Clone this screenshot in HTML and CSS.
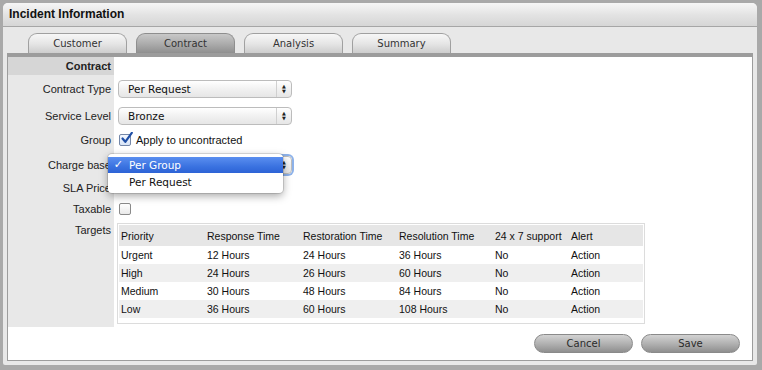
FILE: index.html
```html
<!DOCTYPE html>
<html>
<head>
	<title>Incident Information</title>
	<meta charset="UTF-8">
	<link rel="stylesheet" href="styles.css">
</head>
<body>
	<div class="panel">
		<div class="titlebar">Incident Information</div>
		<div class="tabs">
			<div class="tab">Customer</div>
			<div class="tab active">Contract</div>
			<div class="tab">Analysis</div>
			<div class="tab">Summary</div>
		</div>
		<div class="content">
			<div class="form">
				<div class="row r_head">
					<div class="label">Contract</div>
					<div class="value"></div>
				</div>
				<div class="row r_type">
					<div class="label">Contract Type</div>
					<div class="value">
						<div class="select"><span class="sel_text">Per Request</span><span class="sel_arrow">&#9650;<br>&#9660;</span></div>
					</div>
				</div>
				<div class="row r_level">
					<div class="label">Service Level</div>
					<div class="value">
						<div class="select"><span class="sel_text">Bronze</span><span class="sel_arrow">&#9650;<br>&#9660;</span></div>
					</div>
				</div>
				<div class="row r_group">
					<div class="label">Group</div>
					<div class="value">
						<span class="check checked">
							<svg width="13" height="13" viewBox="0 0 13 13">
								<path d="M2.5 6.5 L5.3 9.8 L11.8 0.8" fill="none" stroke="#1f4fa6" stroke-width="2.2" stroke-linecap="round" stroke-linejoin="round"/>
							</svg>
						</span>
						<span class="check_text">Apply to uncontracted</span>
					</div>
				</div>
				<div class="row r_charge">
					<div class="label">Charge base</div>
					<div class="value">
						<div class="select focus"><span class="sel_text">Per Group</span><span class="sel_arrow">&#9650;<br>&#9660;</span></div>
						<div class="popup">
							<div class="opt picked"><span class="tick">&#10003;</span>Per Group</div>
							<div class="opt"><span class="tick"></span>Per Request</div>
						</div>
					</div>
				</div>
				<div class="row r_price">
					<div class="label">SLA Price</div>
					<div class="value"></div>
				</div>
				<div class="row r_tax">
					<div class="label">Taxable</div>
					<div class="value"><span class="check"></span></div>
				</div>
				<div class="row r_targets">
					<div class="label">Targets</div>
					<div class="value">
						<div class="targets">
							<table>
								<tr class="t_head">
									<td class="c1">Priority</td>
									<td class="c2">Response Time</td>
									<td class="c3">Restoration Time</td>
									<td class="c4">Resolution Time</td>
									<td class="c5">24 x 7 support</td>
									<td>Alert</td>
								</tr>
								<tr>
									<td>Urgent</td><td>12 Hours</td><td>24 Hours</td><td>36 Hours</td><td>No</td><td>Action</td>
								</tr>
								<tr class="odd">
									<td>High</td><td>24 Hours</td><td>26 Hours</td><td>60 Hours</td><td>No</td><td>Action</td>
								</tr>
								<tr>
									<td>Medium</td><td>30 Hours</td><td>48 Hours</td><td>84 Hours</td><td>No</td><td>Action</td>
								</tr>
								<tr class="odd">
									<td>Low</td><td>36 Hours</td><td>60 Hours</td><td>108 Hours</td><td>No</td><td>Action</td>
								</tr>
							</table>
						</div>
					</div>
				</div>
			</div>
			<div class="buttons">
				<div class="button">Cancel</div>
				<div class="button">Save</div>
			</div>
		</div>
	</div>
</body>
</html>
```

FILE: styles.css
```css
*{
	margin: 0px;
	padding: 0px;
	box-sizing: border-box;
}
body{
	width: 762px;
	height: 370px;
	overflow: hidden;
	background-color: #a9a9a9;
	font-family: "Liberation Sans", Arial, sans-serif;
	color: #111;
}
.panel{
	margin: 3px 5px 5px 3px;
	height: 362px;
	background-color: #e8e8e8;
	border-radius: 5px 5px 2px 2px;
	overflow: hidden;
}
.titlebar{
	height: 24px;
	line-height: 23px;
	padding-left: 6px;
	font-size: 12px;
	font-weight: bold;
	background: linear-gradient(#f6f6f6, #e2e2e2 55%, #d6d6d6);
	border-bottom: 1px solid #a6a6a6;
}
.tabs{
	height: 26px;
	display: flex;
	align-items: flex-end;
	gap: 9px;
	padding-left: 25px;
}
.tab{
	width: 99px;
	height: 20px;
	line-height: 19px;
	text-align: center;
	font-family: "DejaVu Sans", Verdana, sans-serif;
	font-size: 10px;
	color: #333;
	border: 1px solid #a0a0a0;
	border-bottom: none;
	border-radius: 9px 9px 0 0;
	background: linear-gradient(#f7f7f7, #e6e6e6 50%, #cdcdcd);
}
.tab.active{
	background: linear-gradient(#c8c8c8, #adadad 50%, #8f8f8f);
	border-color: #8e8e8e;
}
.content{
	margin: 0 4px;
	height: 308px;
	background-color: white;
	border: 1px solid #9c9c9c;
	border-top: 4px solid #9c9c9c;
}
.row{
	display: flex;
}
.label{
	width: 106px;
	background-color: #e8e8e8;
	display: flex;
	align-items: center;
	justify-content: flex-end;
	padding-right: 3px;
	font-size: 11px;
	color: #222;
	white-space: nowrap;
}
.value{
	flex: 1;
	display: flex;
	align-items: center;
	padding-left: 4px;
	position: relative;
}
.r_head{ height: 18px; }
.r_head .label{
	background-color: #d6d6d6;
	font-weight: bold;
}
.r_type{ height: 28px; }
.r_level{ height: 25px; }
.r_group{ height: 24px; }
.r_charge{ height: 25px; }
.r_price{ height: 21px; }
.r_tax{ height: 21px; }
.r_targets{ height: 108px; }
.r_targets .label{
	align-items: flex-start;
	padding-top: 5px;
}
.r_targets .value{
	align-items: flex-start;
	padding-left: 3px;
	padding-top: 4px;
}
.select{
	width: 174px;
	height: 18px;
	display: flex;
	border: 1px solid #bcbcbc;
	border-radius: 4px;
	background: linear-gradient(#ffffff, #f1f1f1 50%, #e6e6e6);
	font-family: "DejaVu Sans", Verdana, sans-serif;
	font-size: 10.5px;
	color: #111;
}
.select.focus{
	box-shadow: 0 0 0 2px #8db2ea;
}
.sel_text{
	flex: 1;
	line-height: 16px;
	padding-left: 9px;
}
.sel_arrow{
	width: 15px;
	border-left: 1px solid #d0d0d0;
	font-size: 5px;
	line-height: 5px;
	text-align: center;
	padding-top: 3px;
	color: #222;
}
.check{
	width: 12px;
	height: 12px;
	margin-left: 1px;
	border: 1px solid #8a8a8a;
	border-radius: 2px;
	background: linear-gradient(#ffffff, #e9e9e9);
	position: relative;
}
.check.checked{
	background: linear-gradient(#f4f8ff, #d8e4f6);
	border-color: #7487a8;
}
.check svg{
	position: absolute;
	left: 0px;
	top: -3px;
}
.check_text{
	font-size: 11px;
	margin-left: 5px;
	color: #111;
}
.popup{
	position: absolute;
	left: -6px;
	top: 2px;
	width: 175px;
	height: 39px;
	padding-top: 3px;
	background-color: white;
	border-radius: 4px;
	box-shadow: 0 3px 9px rgba(0, 0, 0, 0.35), 0 0 0 1px rgba(0, 0, 0, 0.12);
	font-family: "DejaVu Sans", Verdana, sans-serif;
	font-size: 10.5px;
	z-index: 10;
}
.opt{
	height: 17px;
	line-height: 16px;
	display: flex;
	color: #111;
}
.opt.picked{
	height: 16px;
	margin-bottom: 1px;
	color: white;
	background: linear-gradient(#5b8ff0, #3a72e0 60%, #2d63d6);
}
.tick{
	width: 21px;
	text-align: right;
	padding-right: 6px;
	font-size: 11px;
	font-weight: bold;
}
.targets{
	width: 528px;
	height: 101px;
	border: 1px solid #dcdcdc;
	padding: 1px 1px 5px 1px;
}
table{
	width: 100%;
	border-collapse: collapse;
	font-size: 10.5px;
	color: #111;
}
td{
	height: 18px;
	padding-left: 2px;
	white-space: nowrap;
}
.t_head td{
	height: 21px;
	background-color: #e6e6e6;
}
.odd td{
	background-color: #efefef;
}
.c1{ width: 86px; }
.c2{ width: 96px; }
.c3{ width: 96px; }
.c4{ width: 96px; }
.c5{ width: 76px; }
.buttons{
	display: flex;
	justify-content: flex-end;
	gap: 8px;
	padding-top: 7px;
	padding-right: 12px;
}
.button{
	width: 99px;
	height: 19px;
	line-height: 18px;
	text-align: center;
	font-family: "DejaVu Sans", Verdana, sans-serif;
	font-size: 10px;
	color: #2a2a2a;
	border: 1px solid #8a8a8a;
	border-radius: 10px;
	background: linear-gradient(#d2d2d2, #b2b2b2 50%, #8f8f8f);
}
```
